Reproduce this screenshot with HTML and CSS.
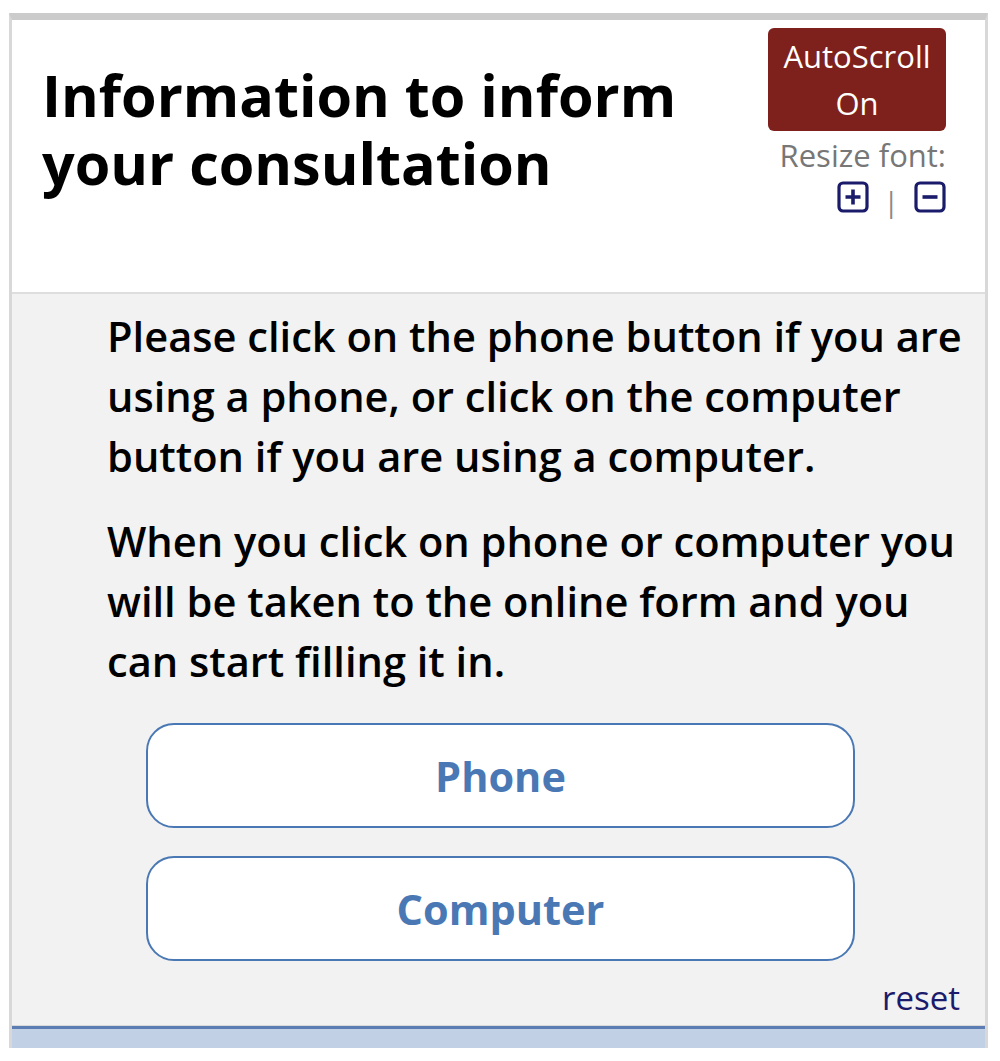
FILE: index.html
```html
<!DOCTYPE html>
<html lang="en">
<head>
<meta charset="utf-8">
<title>Information to inform your consultation</title>
<link rel="stylesheet" href="styles.css">
</head>
<body>
<div class="frame">
  <header class="header">
    <h1 class="title">Information to inform your consultation</h1>
    <div class="tools">
      <button class="autoscroll">AutoScroll<br>On</button>
      <div class="resize-label">Resize font:</div>
      <div class="resize-icons">
        <svg class="icon" viewBox="0 0 32 32" width="32" height="32" aria-label="Increase font">
          <rect x="2" y="2" width="28" height="28" rx="4" fill="none" stroke="#1b1b6b" stroke-width="3.2"/>
          <path d="M16 8.5v15M8.5 16h15" stroke="#1b1b6b" stroke-width="3.6" fill="none"/>
        </svg>
        <span class="sep">|</span>
        <svg class="icon" viewBox="0 0 32 32" width="32" height="32" aria-label="Decrease font">
          <rect x="2" y="2" width="28" height="28" rx="4" fill="none" stroke="#1b1b6b" stroke-width="3.2"/>
          <path d="M8.5 16h15" stroke="#1b1b6b" stroke-width="3.6" fill="none"/>
        </svg>
      </div>
    </div>
  </header>
  <main class="content">
    <p class="text">Please click on the phone button if you are using a phone, or click on the computer button if you are using a computer.</p>
    <p class="text">When you click on phone or computer you will be taken to the online form and you can start filling it in.</p>
    <div class="choices">
      <button class="choice">Phone</button>
      <button class="choice">Computer</button>
    </div>
    <div class="reset-row"><a class="reset" href="#">reset</a></div>
  </main>
  <div class="footer-bar"></div>
</div>
</body>
</html>
```

FILE: styles.css
```css
html, body {
  margin: 0;
  padding: 0;
  background: #ffffff;
}

body {
  font-family: "Open Sans", "Noto Sans", sans-serif;
  color: #000;
}

.frame {
  margin: 13px 0 0 9px;
  width: 979px;
  box-sizing: border-box;
  border-top: 7px solid #cbcbcb;
  border-left: 3px solid #d8d8d8;
  border-right: 3px solid #d8d8d8;
}

.header {
  display: flex;
  justify-content: space-between;
  align-items: flex-start;
  height: 274px;
  border-bottom: 2px solid #dedede;
  background: #fff;
  box-sizing: border-box;
}

.title {
  margin: 41px 0 0 30px;
  font-size: 57.5px;
  font-weight: 700;
  line-height: 68px;
  width: 690px;
}

.tools {
  display: flex;
  flex-direction: column;
  align-items: flex-end;
  margin: 8px 39px 0 0;
}

.autoscroll {
  width: 178px;
  height: 103px;
  background: #7e201b;
  color: #fff;
  border: none;
  border-radius: 6px;
  font-family: "Open Sans", sans-serif;
  font-size: 31px;
  line-height: 47px;
  padding: 0;
}

.resize-label {
  margin-top: 6px;
  font-size: 31px;
  line-height: 36px;
  color: #777;
}

.resize-icons {
  display: flex;
  align-items: center;
  gap: 15px;
  margin-top: 3px;
}

.icon {
  display: block;
}

.sep {
  color: #888;
  font-size: 28px;
  line-height: 34px;
  margin-top: 8px;
}

.content {
  background: #f2f2f2;
  padding: 12px 0 0 0;
  height: 731px;
  box-sizing: border-box;
}

.text {
  margin: 0 0 25px 95px;
  width: 870px;
  font-size: 41.6px;
  font-weight: 600;
  line-height: 60px;
}

.choices {
  display: flex;
  flex-direction: column;
  gap: 28px;
  margin: 32px 0 0 134px;
  width: 709px;
}

.choice {
  height: 105px;
  background: #fff;
  border: 2px solid #4a78b4;
  border-radius: 28px;
  color: #4a78b4;
  font-family: "Open Sans", sans-serif;
  font-size: 41.5px;
  font-weight: 700;
  padding: 0;
}

.reset-row {
  display: flex;
  justify-content: flex-end;
  margin: 18px 25px 0 0;
}

.reset {
  color: #1b1b6b;
  text-decoration: none;
  font-size: 33px;
  line-height: 38px;
}

.footer-bar {
  border-top: 1px solid #d8d8d8;
  height: 22px;
  background: #c1d0e5;
  box-shadow: inset 0 3px 0 #5b7db3;
}
```
